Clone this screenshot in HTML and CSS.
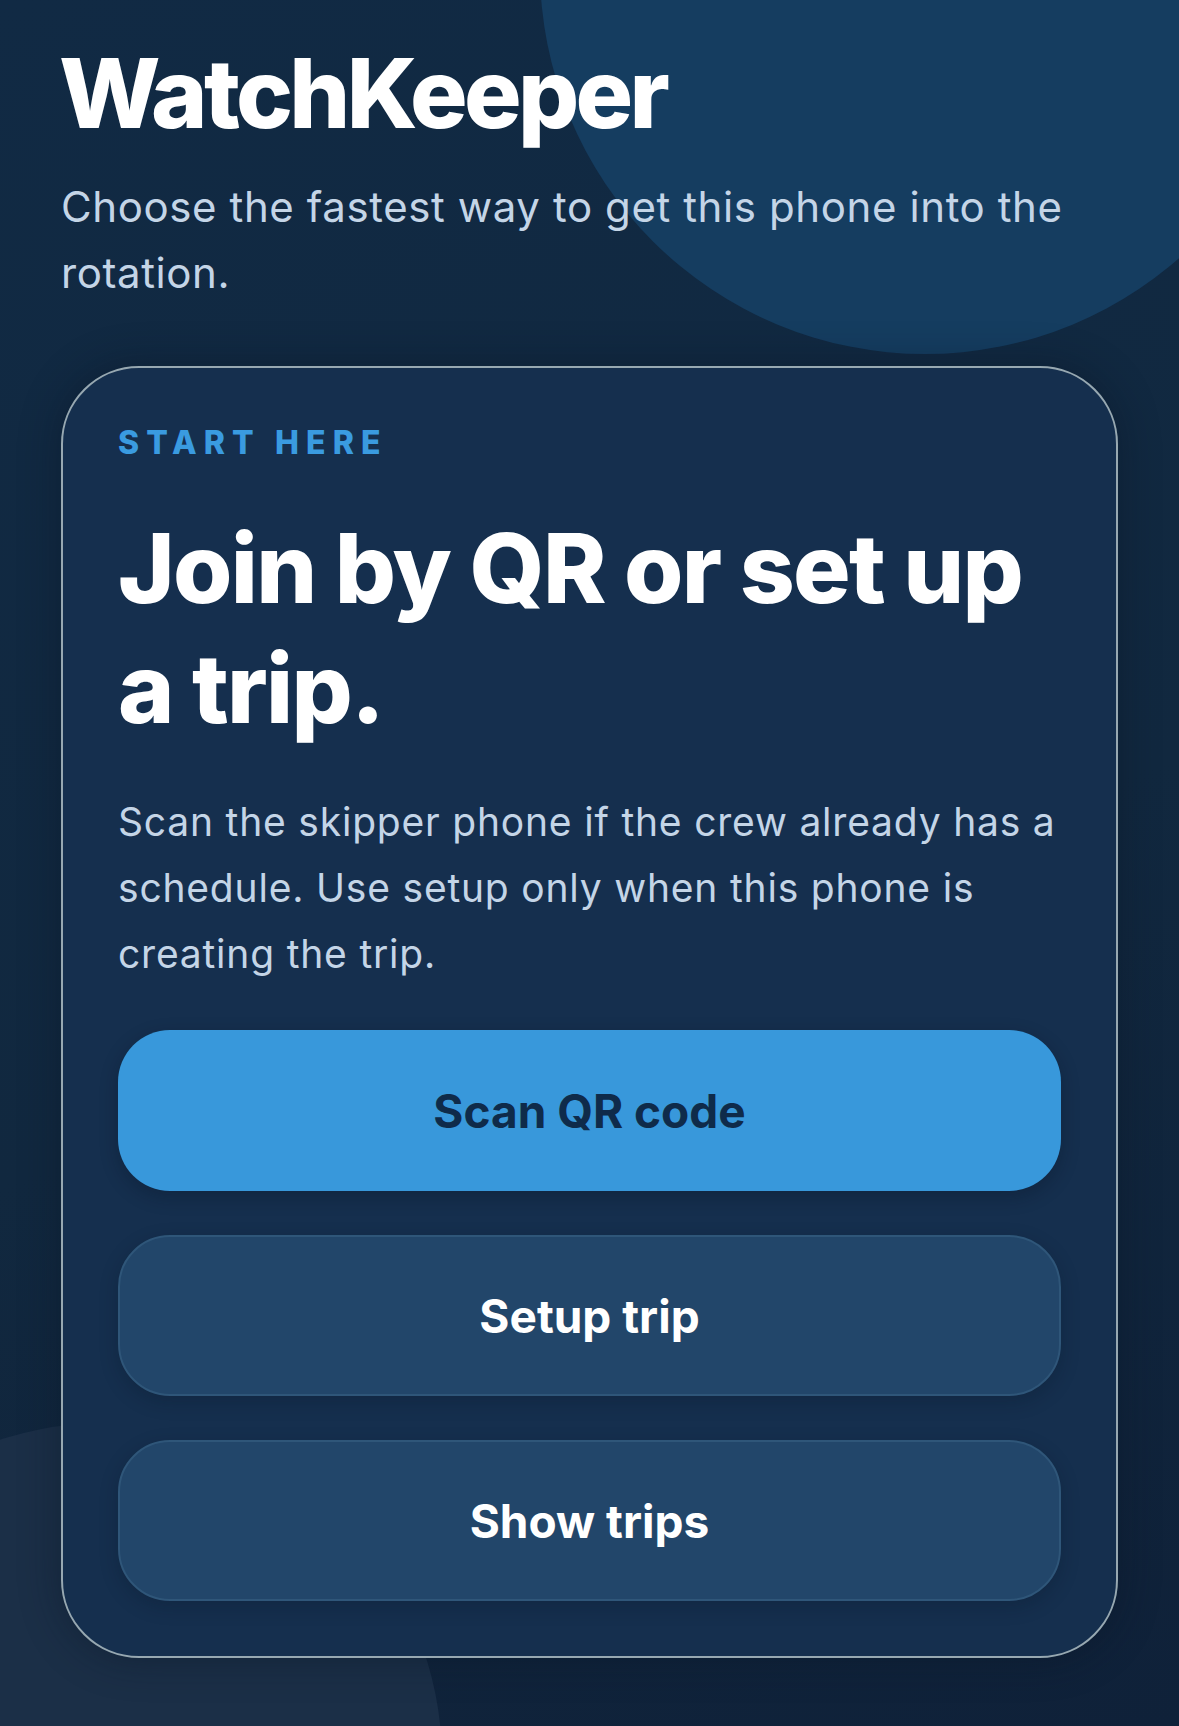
FILE: index.html
```html
<!DOCTYPE html>
<html lang="en">
<head>
    <meta charset="UTF-8">
    <meta name="viewport" content="width=device-width, initial-scale=1.0">
    <title>WatchKeeper</title>
    <link rel="stylesheet" href="styles.css">
</head>
<body>
    <div class="page">
        <div class="orb orb-top"></div>
        <div class="orb orb-bottom"></div>

        <main class="screen">
            <header class="intro">
                <h1>WatchKeeper</h1>
                <p>Choose the fastest way to get this phone into the rotation.</p>
            </header>

            <section class="card">
                <div class="eyebrow">START HERE</div>
                <h2>Join by QR or set up a trip.</h2>
                <p class="lead">Scan the skipper phone if the crew already has a schedule. Use setup only when this phone is creating the trip.</p>

                <div class="actions">
                    <button class="btn btn-primary">Scan QR code</button>
                    <button class="btn btn-secondary">Setup trip</button>
                    <button class="btn btn-secondary">Show trips</button>
                </div>
            </section>
        </main>
    </div>
</body>
</html>
```

FILE: styles.css
```css
* {
    margin: 0;
    padding: 0;
    box-sizing: border-box;
}

body {
    background: #11283f;
    font-family: Inter, "Noto Sans", sans-serif;
    color: #fff;
}

.page {
    position: relative;
    width: 100%;
    height: 1726px;
    overflow: hidden;
    background: linear-gradient(160deg, #112a44 0%, #11283f 55%, #0f2139 100%);
}

/* Decorative circles */
.orb {
    position: absolute;
    border-radius: 50%;
    z-index: 0;
}

.orb-top {
    left: 540px;
    top: -416px;
    width: 770px;
    height: 770px;
    background: #153d60;
}

.orb-bottom {
    left: -232px;
    top: 1423px;
    width: 674px;
    height: 674px;
    background: #1b2f47;
}

.screen {
    position: relative;
    z-index: 1;
    padding: 38px 61px 0;
    display: flex;
    flex-direction: column;
    gap: 60px;
}

/* Intro */
.intro h1 {
    font-size: 96px;
    line-height: 110px;
    font-weight: 800;
    letter-spacing: -3.7px;
    margin-left: -2px;
}

.intro p {
    margin-top: 26px;
    font-size: 42px;
    line-height: 66px;
    color: #c4d5e7;
    letter-spacing: 0.6px;
}

/* Card */
.card {
    background: #152f4e;
    border: 2px solid #97a8b1;
    border-radius: 78px;
    padding: 55px;
    box-shadow: 0 0 40px rgba(8, 20, 36, 0.45);
    display: flex;
    flex-direction: column;
}

.eyebrow {
    font-size: 32px;
    line-height: 40px;
    font-weight: 800;
    letter-spacing: 7.1px;
    color: #3a9be0;
}

.card h2 {
    margin-top: 45px;
    font-size: 96px;
    line-height: 120px;
    font-weight: 800;
    letter-spacing: -1.7px;
}

.lead {
    margin-top: 41px;
    font-size: 39px;
    line-height: 66px;
    letter-spacing: 0.8px;
    color: #c4d5e7;
}

.actions {
    margin-top: 43px;
    display: flex;
    flex-direction: column;
    gap: 44px;
}

.btn {
    height: 161px;
    border-radius: 52px;
    font-family: Inter, "Noto Sans", sans-serif;
    font-size: 46px;
    font-weight: 700;
    cursor: pointer;
}

.btn-primary {
    background: #3898db;
    border: none;
    color: #0f2b4a;
    box-shadow: 0 6px 18px rgba(6, 18, 34, 0.3);
}

.btn-secondary {
    background: #22466a;
    border: 2px solid #2f5679;
    color: #fff;
    box-shadow: 0 6px 18px rgba(6, 18, 34, 0.25);
}
```
